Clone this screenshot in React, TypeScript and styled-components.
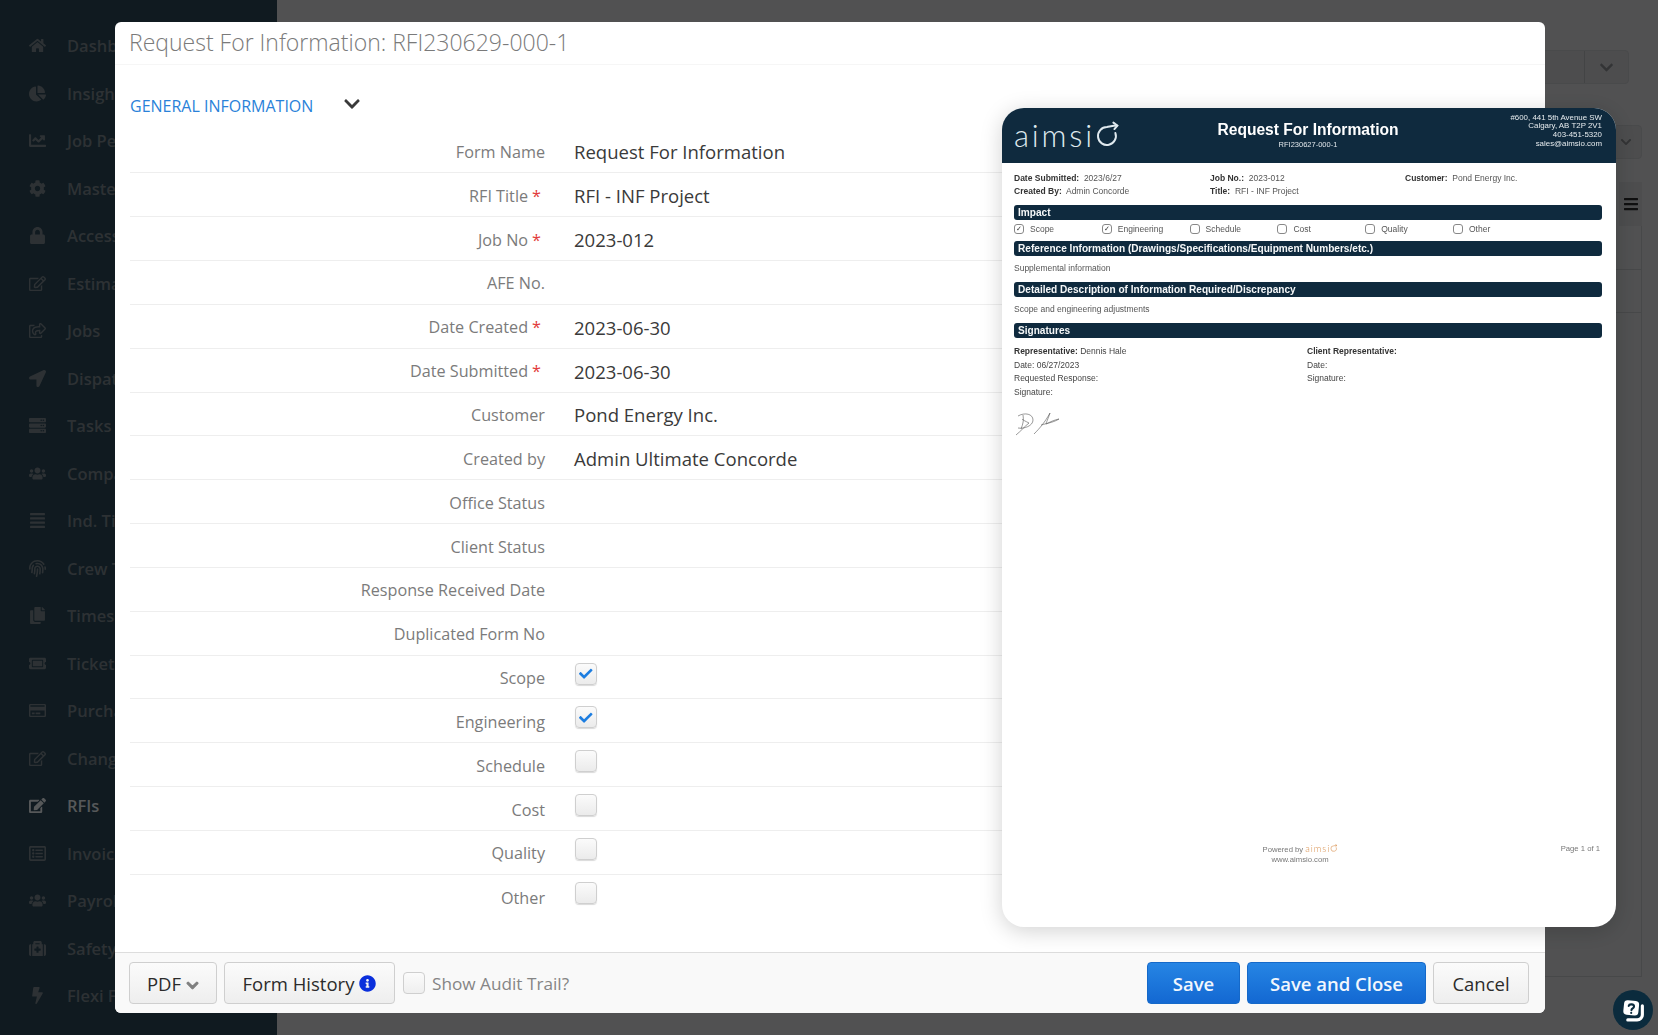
import styled, { createGlobalStyle } from 'styled-components'
import {
  FaBolt, FaChartLine, FaChartPie, FaCheck, FaChevronDown, FaCog, FaCopy, FaEdit, FaFingerprint,
  FaHome, FaInfoCircle, FaLocationArrow, FaLock, FaMedkit, FaBars, FaRegCreditCard, FaRegEdit,
  FaRegListAlt, FaRegShareSquare, FaServer, FaTicketAlt, FaUsers, FaAlignJustify,
} from 'react-icons/fa'

const GlobalStyle = createGlobalStyle`
  html, body {
    margin: 0;
    height: 100%;
    overflow: hidden;
    font-family: "Open Sans", "Liberation Sans", sans-serif;
  }
  * { box-sizing: border-box; }
`

const navItems = [
  { label: 'Dashboard', icon: <FaHome /> },
  { label: 'Insights', icon: <FaChartPie /> },
  { label: 'Job Performance', icon: <FaChartLine /> },
  { label: 'Master Data', icon: <FaCog /> },
  { label: 'Access', icon: <FaLock /> },
  { label: 'Estimates', icon: <FaRegEdit /> },
  { label: 'Jobs', icon: <FaRegShareSquare /> },
  { label: 'Dispatch', icon: <FaLocationArrow /> },
  { label: 'Tasks', icon: <FaServer /> },
  { label: 'Company', icon: <FaUsers /> },
  { label: 'Ind. Time', icon: <FaAlignJustify /> },
  { label: 'Crew Time', icon: <FaFingerprint /> },
  { label: 'Timesheets', icon: <FaCopy /> },
  { label: 'Tickets', icon: <FaTicketAlt /> },
  { label: 'Purchase Orders', icon: <FaRegCreditCard /> },
  { label: 'Change Orders', icon: <FaRegEdit /> },
  { label: 'RFIs', icon: <FaEdit />, active: true },
  { label: 'Invoices', icon: <FaRegListAlt /> },
  { label: 'Payroll', icon: <FaUsers /> },
  { label: 'Safety', icon: <FaMedkit /> },
  { label: 'Flexi Forms', icon: <FaBolt /> },
]

const textRows = [
  { label: 'Form Name', value: 'Request For Information' },
  { label: 'RFI Title', value: 'RFI - INF Project', required: true },
  { label: 'Job No', value: '2023-012', required: true },
  { label: 'AFE No.' },
  { label: 'Date Created', value: '2023-06-30', required: true },
  { label: 'Date Submitted', value: '2023-06-30', required: true },
  { label: 'Customer', value: 'Pond Energy Inc.' },
  { label: 'Created by', value: 'Admin Ultimate Concorde' },
  { label: 'Office Status' },
  { label: 'Client Status' },
  { label: 'Response Received Date' },
  { label: 'Duplicated Form No' },
]

const checkRows = [
  { label: 'Scope', checked: true },
  { label: 'Engineering', checked: true },
  { label: 'Schedule' },
  { label: 'Cost' },
  { label: 'Quality' },
  { label: 'Other' },
]

function AimsioLogo({ size, color }: { size: number; color: string }) {
  return (
    <LogoWrap $size={size} $color={color}>
      aimsi
      <svg width={size * 0.77} height={size * 0.84} viewBox="0 0 24 26" fill="none" stroke={color} strokeWidth="2" strokeLinecap="round">
        <path d="M20.5 12A9 9 0 1 1 12 6C15 5.5 18 4.5 22 4.5" />
        <path d="M18.5 1.5L22.5 4.5L19.5 8" />
      </svg>
    </LogoWrap>
  )
}

function ChatIcon() {
  return (
    <svg width="25" height="25" viewBox="0 0 24 24">
      <path d="M20.5 7.5V16a5 5 0 0 1-5 5H6.5" fill="none" stroke="#fff" strokeWidth="3" strokeLinecap="round" />
      <rect x="2.5" y="2.5" width="14.5" height="14" rx="3.5" fill="#fff" transform="rotate(6 10 10)" />
      <path d="M7.4 7.6C7.8 5.4 12.7 5.6 12.5 8.3C12.4 10 10.3 10 10 11.6M9.8 14.2V14.4" fill="none" stroke="#0b2b3d" strokeWidth="2" strokeLinecap="round" />
    </svg>
  )
}

export default function App() {
  return (
    <>
      <GlobalStyle />
      <Shell>
        <Sidebar>
          {navItems.map((item) => (
            <NavItem key={item.label} $active={item.active}>
              <NavIcon>{item.icon}</NavIcon>
              {item.label}
            </NavItem>
          ))}
        </Sidebar>
        <Main>
          <GhostSelect>
            <span />
            <span><FaChevronDown /></span>
          </GhostSelect>
          <GhostSmallSelect><FaChevronDown /></GhostSmallSelect>
          <GhostMenu><FaBars /></GhostMenu>
          <GhostTable>
            <div />
            <div />
          </GhostTable>
        </Main>
      </Shell>
      <Backdrop />

      <Modal>
        <ModalHeader>Request For Information: RFI230629-000-1</ModalHeader>
        <ModalBody>
          <SectionHeading>
            GENERAL INFORMATION
            <FaChevronDown />
          </SectionHeading>
          {textRows.map((row) => (
            <FormRow key={row.label}>
              <FieldLabel>
                {row.label}
                {row.required && <Required>*</Required>}
              </FieldLabel>
              <FieldValue>{row.value}</FieldValue>
            </FormRow>
          ))}
          {checkRows.map((row) => (
            <FormRow key={row.label}>
              <FieldLabel>{row.label}</FieldLabel>
              <FieldValue>
                <CheckBox>{row.checked && <FaCheck />}</CheckBox>
              </FieldValue>
            </FormRow>
          ))}
        </ModalBody>
        <ModalFooter>
          <FooterGroup>
            <Button $width={88}>PDF <SmallChevron><FaChevronDown /></SmallChevron></Button>
            <Button $width={171}>Form History <InfoMark><FaInfoCircle /></InfoMark></Button>
            <AuditBox />
            <AuditLabel>Show Audit Trail?</AuditLabel>
          </FooterGroup>
          <FooterGroup>
            <Button $primary $width={93}>Save</Button>
            <Button $primary $width={179}>Save and Close</Button>
            <Button $width={96}>Cancel</Button>
          </FooterGroup>
        </ModalFooter>

        <PdfCard>
          <PdfHeader>
            <AimsioLogo size={31} color="#dfe9ee" />
            <PdfTitle>
              <h1>Request For Information</h1>
              <div>RFI230627-000-1</div>
            </PdfTitle>
            <PdfAddress>
              <div>#600, 441 5th Avenue SW</div>
              <div>Calgary, AB T2P 2V1</div>
              <div>403-451-5320</div>
              <div>sales@aimsio.com</div>
            </PdfAddress>
          </PdfHeader>
          <PdfBody>
            <InfoGrid>
              <div><b>Date Submitted:</b>&nbsp; 2023/6/27</div>
              <div><b>Job No.:</b>&nbsp; 2023-012</div>
              <div><b>Customer:</b>&nbsp; Pond Energy Inc.</div>
              <div><b>Created By:</b>&nbsp; Admin Concorde</div>
              <div><b>Title:</b>&nbsp; RFI - INF Project</div>
            </InfoGrid>
            <PdfBar>Impact</PdfBar>
            <ImpactRow>
              {checkRows.map((row) => (
                <ImpactItem key={row.label}>
                  <ImpactBox>{row.checked && '✓'}</ImpactBox>
                  {row.label}
                </ImpactItem>
              ))}
            </ImpactRow>
            <PdfBar>Reference Information (Drawings/Specifications/Equipment Numbers/etc.)</PdfBar>
            <PdfParagraph>Supplemental information</PdfParagraph>
            <PdfBar>Detailed Description of Information Required/Discrepancy</PdfBar>
            <PdfParagraph>Scope and engineering adjustments</PdfParagraph>
            <PdfBar>Signatures</PdfBar>
            <SignatureGrid>
              <div>
                <SignatureLine><b>Representative:</b> Dennis Hale</SignatureLine>
                <SignatureLine>Date: 06/27/2023</SignatureLine>
                <SignatureLine>Requested Response:</SignatureLine>
                <SignatureLine>Signature:</SignatureLine>
                <Scribble width="46" height="24" viewBox="0 0 46 24" fill="none" stroke="#555" strokeWidth="0.6">
                  <path d="M3 4C10 0 18 2 18 8C18 14 9 17 3 16M8 3C9 8 8 12 6 17M1 23C6 19 10 14 14 11C10 9 8 8 7 7" />
                  <path d="M19 22C25 16 30 10 35 1C33 7 31 11 31 12C35 10 39 8 44 7C39 10 34 11 26 13" />
                </Scribble>
              </div>
              <div>
                <SignatureLine><b>Client Representative:</b></SignatureLine>
                <SignatureLine>Date:</SignatureLine>
                <SignatureLine>Signature:</SignatureLine>
              </div>
            </SignatureGrid>
            <PdfFooter>
              <span />
              <Powered>
                <div>Powered by <AimsioLogo size={9.5} color="#d9914f" /></div>
                <div>www.aimsio.com</div>
              </Powered>
              <PageNumber>Page 1 of 1</PageNumber>
            </PdfFooter>
          </PdfBody>
        </PdfCard>
      </Modal>

      <ChatButton><ChatIcon /></ChatButton>
    </>
  )
}

const Shell = styled.div`
  display: flex;
  height: 100vh;
  background: #a2a3a5;
`

const Sidebar = styled.nav`
  width: 277px;
  flex-shrink: 0;
  padding-top: 22px;
  background: #203440;
  overflow: hidden;
`

const NavItem = styled.div<{ $active?: boolean }>`
  display: flex;
  align-items: center;
  height: 47.5px;
  padding-left: 29px;
  white-space: nowrap;
  font-size: 16.5px;
  font-weight: 600;
  color: ${(p) => (p.$active ? '#acb0b3' : '#5a6368')};
`

const NavIcon = styled.span`
  display: inline-flex;
  width: 38px;
  font-size: 17px;
`

const Main = styled.main`
  flex: 1;
  display: flex;
  flex-direction: column;
  align-items: flex-end;
  padding-top: 50px;
  color: #66686b;
`

const GhostSelect = styled.div`
  display: flex;
  width: 200px;
  height: 34px;
  margin-right: 29px;
  border: 1px solid #929496;
  border-radius: 4px;
  background: #9a9b9d;

  span:first-child {
    flex: 1;
    border-right: 1px solid #87898b;
  }
  span:last-child {
    display: flex;
    width: 43px;
    align-items: center;
    justify-content: center;
    font-size: 15px;
  }
`

const GhostSmallSelect = styled.div`
  display: flex;
  align-items: center;
  justify-content: center;
  width: 32px;
  height: 34px;
  margin: 41px 16px 0 0;
  border: 1px solid #929496;
  border-radius: 4px;
  background: #9a9b9d;
  font-size: 12px;
`

const GhostMenu = styled.div`
  display: flex;
  align-items: center;
  justify-content: center;
  width: 23px;
  height: 44px;
  margin: 23px 16px 0 0;
  background: #9a9b9d;
  color: #1f1f20;
  font-size: 16px;
`

const GhostTable = styled.div`
  width: 300px;
  height: 751px;
  margin-right: 16px;
  border-right: 1px solid #8f9193;
  border-bottom: 1px solid #8f9193;

  div {
    height: 43.5px;
    border-bottom: 1px solid #8f9193;
  }
`

const Backdrop = styled.div`
  position: fixed;
  inset: 0;
  background: rgba(0, 0, 0, 0.5);
`

const Modal = styled.section`
  position: fixed;
  left: 115px;
  top: 22px;
  width: 1430px;
  height: 991px;
  display: flex;
  flex-direction: column;
  background: #fff;
  border-radius: 6px;
`

const ModalHeader = styled.header`
  height: 43px;
  padding-left: 14px;
  border-bottom: 1px solid #f6f6f6;
  font-size: 23px;
  font-weight: 300;
  line-height: 40px;
  color: #7a7a7a;
`

const ModalBody = styled.div`
  flex: 1;
  padding: 0 15px;
  overflow: hidden;
`

const SectionHeading = styled.h2`
  display: flex;
  height: 64.5px;
  margin: 0;
  padding: 26px 0 0 0;
  font-size: 16px;
  font-weight: 400;
  line-height: 30px;
  color: #2a82d9;
  white-space: nowrap;

  svg {
    margin: 4px 0 0 30px;
    width: 18px;
    height: 18px;
    color: #3a3a3a;
  }
`

const FormRow = styled.div`
  display: flex;
  align-items: center;
  height: 43.85px;
  padding-top: 2px;
  border-bottom: 1px solid #eee;

  &:last-child {
    border-bottom: none;
  }
`

const FieldLabel = styled.label`
  width: 415px;
  text-align: right;
  font-size: 16.2px;
  color: #7b7b7b;
`

const Required = styled.span`
  margin: 0 4px;
  color: #e23b3b;
`

const FieldValue = styled.div`
  margin-left: 29px;
  font-size: 18.55px;
  color: #3a3a3a;
`

const CheckBox = styled.span`
  display: flex;
  align-items: center;
  justify-content: center;
  width: 22px;
  height: 22px;
  margin: -9px 0 0 1px;
  border: 1px solid #cfcfcf;
  border-radius: 4px;
  background: linear-gradient(#fbfbfb, #ebebeb);
  box-shadow: 0 1px 1px rgba(0, 0, 0, 0.15);
  color: #1c7de0;
  font-size: 13.5px;
`

const ModalFooter = styled.footer`
  display: flex;
  align-items: center;
  justify-content: space-between;
  height: 61px;
  padding: 0 16px 0 14px;
  border-top: 1px solid #ddd;
  border-radius: 0 0 6px 6px;
  background: #f9f9f9;
`

const FooterGroup = styled.div`
  display: flex;
  align-items: center;
  gap: 7px;
`

const Button = styled.button<{ $primary?: boolean; $width: number }>`
  display: inline-flex;
  align-items: center;
  justify-content: center;
  gap: 5px;
  width: ${(p) => p.$width}px;
  height: 42px;
  padding: 0;
  border-radius: 4px;
  font-family: inherit;
  font-size: 18.5px;
  font-weight: ${(p) => (p.$primary ? 600 : 400)};
  color: ${(p) => (p.$primary ? '#f2f7fd' : '#2b2b2b')};
  border: 1px solid ${(p) => (p.$primary ? '#1569c9' : '#cfcfcf')};
  background: ${(p) => (p.$primary ? 'linear-gradient(#2685e4, #1368d2)' : 'linear-gradient(#fbfbfb, #eee)')};
`

const SmallChevron = styled.span`
  display: inline-flex;
  margin-top: 4px;
  color: #7f7f7f;
  font-size: 13px;

  svg {
    stroke: currentColor;
    stroke-width: 40;
  }
`

const InfoMark = styled.span`
  display: inline-flex;
  color: #0a2fdc;
  font-size: 17px;
`

const AuditBox = styled.span`
  width: 22px;
  height: 22px;
  margin-left: 1px;
  border: 1px solid #cfcfcf;
  border-radius: 4px;
  background: linear-gradient(#fbfbfb, #efefef);
`

const AuditLabel = styled.span`
  font-size: 17.2px;
  color: #858585;
`

const PdfCard = styled.article`
  position: absolute;
  left: 887px;
  top: 86px;
  width: 614px;
  height: 819px;
  display: flex;
  flex-direction: column;
  overflow: hidden;
  border-radius: 22px;
  background: #fff;
  box-shadow: 0 4px 22px rgba(0, 0, 0, 0.18);
  font-family: "Liberation Sans", Arial, sans-serif;
  color: #444;
`

const PdfHeader = styled.div`
  display: grid;
  grid-template-columns: 1fr auto 1fr;
  align-items: center;
  height: 55px;
  padding: 0 14px 0 12px;
  background: #0f2a3e;
  color: #fff;
`

const LogoWrap = styled.span<{ $size: number; $color: string }>`
  display: inline-flex;
  align-items: baseline;
  font-family: Lato, "Open Sans", sans-serif;
  font-weight: 300;
  font-size: ${(p) => p.$size}px;
  line-height: 1;
  letter-spacing: ${(p) => p.$size * 0.09}px;
  color: ${(p) => p.$color};
  vertical-align: baseline;
`

const PdfTitle = styled.div`
  padding-bottom: 2px;
  text-align: center;
  line-height: 1;

  h1 {
    margin: 0;
    font-size: 15.6px;
    line-height: 20px;
    font-weight: 700;
  }
  div {
    font-size: 7.5px;
    line-height: 9px;
    color: #dfe5e9;
  }
`

const PdfAddress = styled.div`
  align-self: start;
  margin-top: 5.5px;
  text-align: right;
  font-size: 7.9px;
  line-height: 8.7px;
  color: #e6ebee;
`

const PdfBody = styled.div`
  flex: 1;
  display: flex;
  flex-direction: column;
  padding: 8px 14px 0 12px;
  font-size: 8.5px;
`

const InfoGrid = styled.div`
  display: grid;
  grid-template-columns: 196px 195px 1fr;
  grid-auto-rows: 13.5px;
  align-items: center;
  margin-bottom: 7px;
  height: 27px;
  color: #555;

  b { color: #333; }
`

const PdfBar = styled.div`
  height: 15px;
  padding-left: 4px;
  border-radius: 3px;
  background: #0f2a3e;
  color: #f5f7f8;
  font-size: 10.1px;
  font-weight: 700;
  line-height: 15px;
`

const ImpactRow = styled.div`
  display: grid;
  grid-template-columns: repeat(6, 87.8px);
  align-items: center;
  height: 18px;
  margin-bottom: 3px;
`

const ImpactItem = styled.div`
  display: flex;
  align-items: center;
  gap: 6px;
  color: #555;
`

const ImpactBox = styled.span`
  display: flex;
  align-items: center;
  justify-content: center;
  width: 10px;
  height: 10px;
  border: 1px solid #888;
  border-radius: 3px;
  font-size: 7px;
  color: #333;
`

const PdfParagraph = styled.div`
  height: 26px;
  line-height: 24.5px;
  color: #555;
`

const SignatureGrid = styled.div`
  display: grid;
  grid-template-columns: 293px 1fr;
  padding-top: 7px;
  color: #444;
`

const SignatureLine = styled.div`
  height: 13.6px;
  line-height: 13.6px;

  b { color: #333; }
`

const Scribble = styled.svg`
  display: block;
  margin: 13px 0 0 1px;
`

const PdfFooter = styled.div`
  display: grid;
  grid-template-columns: 230px 112px 1fr;
  margin-top: auto;
  margin-bottom: 62px;
  font-size: 7.7px;
  color: #777;
`

const Powered = styled.div`
  text-align: center;
  line-height: 10px;
`

const PageNumber = styled.div`
  padding-right: 2px;
  text-align: right;
`

const ChatButton = styled.button`
  position: fixed;
  left: 1613px;
  top: 990px;
  display: flex;
  align-items: center;
  justify-content: center;
  width: 40px;
  height: 40px;
  padding: 0;
  border: none;
  border-radius: 50%;
  background: #0b2b3d;
`
